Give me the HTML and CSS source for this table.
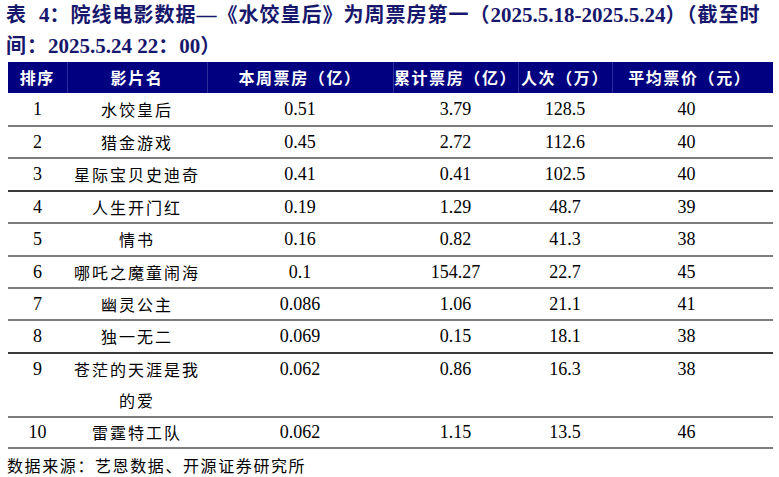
FILE: index.html
```html
<!DOCTYPE html>
<html lang="zh-CN">
<head>
<meta charset="utf-8">
<title>院线电影数据</title>
<link rel="stylesheet" href="styles.css">
</head>
<body>
<div class="title">
  <span class="tline">表<span class="gap"> </span><span class="d">4</span>：院线电影数据—《水饺皇后》为周票房第一（<span class="d">2025.5.18-2025.5.24</span>）（截至时</span>
  <span class="tline">间：<span class="d">2025.5.24 22</span>：<span class="d">00</span>）</span>
</div>
<table class="data">
  <colgroup>
    <col class="c1"><col class="c2"><col class="c3"><col class="c4"><col class="c5"><col class="c6">
  </colgroup>
  <thead>
    <tr>
      <th>排序</th><th>影片名</th><th>本周票房（亿）</th><th>累计票房（亿）</th><th>人次（万）</th><th class="last">平均票价（元）</th>
    </tr>
  </thead>
  <tbody>
    <tr><td class="num">1</td><td class="cn">水饺皇后</td><td class="num">0.51</td><td class="num">3.79</td><td class="num">128.5</td><td class="num last">40</td></tr>
    <tr><td class="num">2</td><td class="cn">猎金游戏</td><td class="num">0.45</td><td class="num">2.72</td><td class="num">112.6</td><td class="num last">40</td></tr>
    <tr><td class="num">3</td><td class="cn">星际宝贝史迪奇</td><td class="num">0.41</td><td class="num">0.41</td><td class="num">102.5</td><td class="num last">40</td></tr>
    <tr class="dark"><td class="num">4</td><td class="cn">人生开门红</td><td class="num">0.19</td><td class="num">1.29</td><td class="num">48.7</td><td class="num last">39</td></tr>
    <tr><td class="num">5</td><td class="cn">情书</td><td class="num">0.16</td><td class="num">0.82</td><td class="num">41.3</td><td class="num last">38</td></tr>
    <tr><td class="num">6</td><td class="cn">哪吒之魔童闹海</td><td class="num">0.1</td><td class="num">154.27</td><td class="num">22.7</td><td class="num last">45</td></tr>
    <tr><td class="num">7</td><td class="cn">幽灵公主</td><td class="num">0.086</td><td class="num">1.06</td><td class="num">21.1</td><td class="num last">41</td></tr>
    <tr><td class="num">8</td><td class="cn">独一无二</td><td class="num">0.069</td><td class="num">0.15</td><td class="num">18.1</td><td class="num last">38</td></tr>
    <tr class="dark tall"><td class="num">9</td><td class="cn">苍茫的天涯是我<br>的爱</td><td class="num">0.062</td><td class="num">0.86</td><td class="num">16.3</td><td class="num last">38</td></tr>
    <tr class="final"><td class="num">10</td><td class="cn">雷霆特工队</td><td class="num">0.062</td><td class="num">1.15</td><td class="num">13.5</td><td class="num last">46</td></tr>
  </tbody>
</table>
<div class="source">数据来源：艺恩数据、开源证券研究所</div>
</body>
</html>
```
FILE: styles.css
```css
html, body {
  margin: 0;
  padding: 0;
  background: #ffffff;
}

body {
  width: 779px;
  height: 477px;
  overflow: hidden;
  font-family: "Liberation Serif", "Noto Sans CJK SC", serif;
  color: #000000;
}

.title {
  padding: 0 0 0 6px;
  height: 62px;
  color: #17176c;
  font-weight: bold;
  font-size: 20px;
  letter-spacing: 1px;
  line-height: 31px;
  font-family: "Liberation Serif", "Noto Sans CJK SC", serif;
}

.tline {
  display: block;
  white-space: nowrap;
}

.title .gap {
  display: inline-block;
  width: 12px;
}

.title .d {
  letter-spacing: 0;
  font-size: 21px;
}

.data {
  margin-left: 8px;
  width: 765px;
  border-collapse: collapse;
  table-layout: fixed;
}

.c1 { width: 59px; }
.c2 { width: 140px; }
.c3 { width: 186px; }
.c4 { width: 125px; }
.c5 { width: 94px; }
.c6 { width: 161px; }

.data th {
  background: #000080;
  color: #ffffff;
  font-family: "Noto Sans CJK SC", sans-serif;
  font-weight: bold;
  font-size: 16px;
  letter-spacing: 1.6px;
  height: 31px;
  line-height: 31px;
  padding: 0;
  white-space: nowrap;
  text-align: center;
  border-left: 1px solid #2c2c9c;
}

.data th:first-child {
  border-left: none;
}

.data td {
  padding: 0;
  text-align: center;
  vertical-align: top;
  line-height: 30.4px;
  border-top: 2px solid #7c7c7c;
  white-space: nowrap;
}

.data tbody tr:first-child td {
  border-top: none;
  line-height: 32px;
}

.data tr.dark td {
  border-top-color: #3a3a3a;
}

.data tr.tall td {
  line-height: 31px;
}

.data tr.final td {
  line-height: 29px;
  border-bottom: 2px solid #7c7c7c;
}

.num {
  font-family: "Liberation Serif", serif;
  font-size: 18px;
}

.cn {
  font-family: "Noto Sans CJK SC", sans-serif;
  font-size: 16px;
  letter-spacing: 2px;
}

.data td.last {
  padding-right: 12px;
}

.data th.last {
  padding-right: 6px;
}

.source {
  padding-left: 7px;
  font-family: "Noto Sans CJK SC", sans-serif;
  font-size: 16px;
  letter-spacing: 1.6px;
  line-height: 32px;
}
```
